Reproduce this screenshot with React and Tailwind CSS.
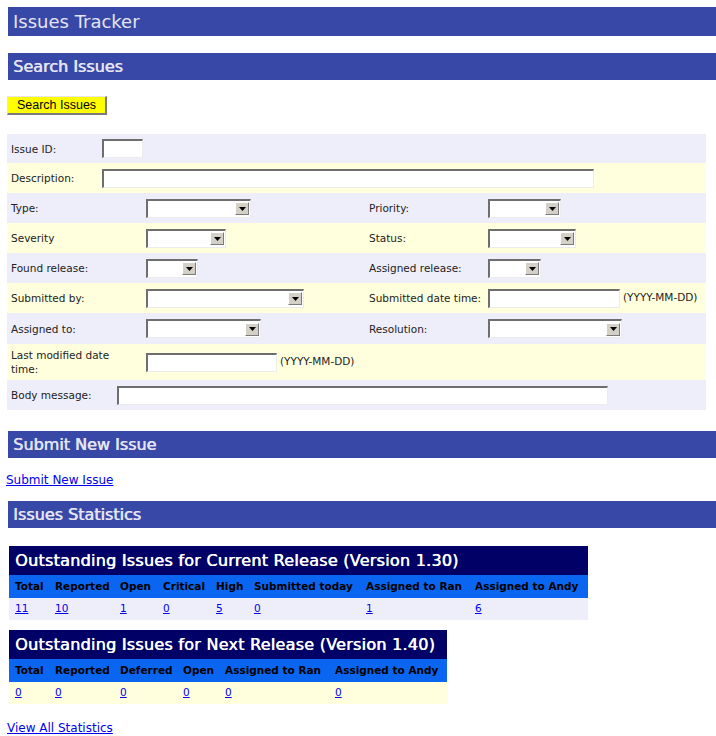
const dv = "font-['DejaVu_Sans',sans-serif]";

function Box({ w, arrow }) {
  return (
    <div className={`${w} h-[19px] shrink-0 bg-white border-t-2 border-l-2 border-t-[#6e6e6e] border-l-[#6e6e6e] border-r border-b border-r-[#ececec] border-b-[#ececec] flex items-center justify-end pr-[1px]`}>
      {arrow && (
        <div className="w-[14px] h-[13px] bg-[#d4d0c8] border-t border-l border-t-white border-l-white border-r border-b border-r-[#7b7b7b] border-b-[#7b7b7b] flex items-center justify-center">
          <svg width="7" height="4" viewBox="0 0 7 4"><polygon points="0,0 7,0 3.5,4" fill="#000" /></svg>
        </div>
      )}
    </div>
  );
}

function Row({ bg, h, children }) {
  return <div className={`${bg} ${h} flex items-center`}>{children}</div>;
}

function Label({ w, children }) {
  return <div className={`${w} shrink-0 pl-[4px] text-[10.5px] leading-[14px] text-[#222]`}>{children}</div>;
}

function Bar({ children, h = "h-[27px]", size = "text-[16px]", bold = true }) {
  return (
    <div className={`ml-2 w-[708px] ${h} bg-[#3748a6] flex items-center pl-[5px] ${size} text-[#e4e4f4] ${bold ? "[text-shadow:0.6px_0_0_#e4e4f4]" : ""}`}>
      {children}
    </div>
  );
}

function StatTable({ title, width, cols, values, rowBg }) {
  return (
    <div className={`ml-[9px] ${width}`}>
      <div className="h-[29px] bg-[#000066] flex items-center pl-[6px] text-[16px] tracking-[0.25px] text-white [text-shadow:0.6px_0_0_#fff]">{title}</div>
      <div className="h-[23px] bg-[#0a66f0] flex items-center">
        {cols.map(([label, w]) => (
          <div key={label} className={`${w} shrink-0 pl-[6px] text-[10.5px] font-bold text-black whitespace-nowrap`}>{label}</div>
        ))}
      </div>
      <div className={`h-[22px] ${rowBg} flex items-center`}>
        {cols.map(([label, w], i) => (
          <div key={label} className={`${w} shrink-0 pl-[6px] text-[10.5px]`}>
            <a href="#" className="text-[#0000ee] underline">{values[i]}</a>
          </div>
        ))}
      </div>
    </div>
  );
}

export default function App() {
  const lav = "bg-[#eeeefb]";
  const yel = "bg-[#ffffdd]";
  return (
    <div className={`${dv} bg-white w-[716px] h-[736px] overflow-hidden pt-[7px]`}>
      <Bar h="h-[29px]" size="text-[18px]" bold={false}>Issues Tracker</Bar>
      <div className="mt-[17px]"><Bar>Search Issues</Bar></div>

      <button className="mt-[16px] ml-[7px] w-[100px] h-[19px] bg-[#ffff00] border-t border-l border-t-[#e6e6e6] border-l-[#e6e6e6] border-r-2 border-b-2 border-r-[#7a7a7a] border-b-[#7a7a7a] font-['Liberation_Sans',sans-serif] text-[12.5px] text-black leading-none flex items-center justify-center">
        Search Issues
      </button>

      <div className="mt-[19px] ml-[7px] w-[699px]">
        <Row bg={lav} h="h-[29px]">
          <Label w="w-[95px]">Issue ID:</Label>
          <Box w="w-[41px]" />
        </Row>
        <Row bg={yel} h="h-[30px]">
          <Label w="w-[95px]">Description:</Label>
          <Box w="w-[492px]" />
        </Row>
        <Row bg={lav} h="h-[30px]">
          <Label w="w-[139px]">Type:</Label>
          <div className="w-[219px] shrink-0"><Box w="w-[105px]" arrow /></div>
          <Label w="w-[123px]">Priority:</Label>
          <Box w="w-[73px]" arrow />
        </Row>
        <Row bg={yel} h="h-[30px]">
          <Label w="w-[139px]">Severity</Label>
          <div className="w-[219px] shrink-0"><Box w="w-[80px]" arrow /></div>
          <Label w="w-[123px]">Status:</Label>
          <Box w="w-[88px]" arrow />
        </Row>
        <Row bg={lav} h="h-[30px]">
          <Label w="w-[139px]">Found release:</Label>
          <div className="w-[219px] shrink-0"><Box w="w-[52px]" arrow /></div>
          <Label w="w-[123px]">Assigned release:</Label>
          <Box w="w-[53px]" arrow />
        </Row>
        <Row bg={yel} h="h-[30px]">
          <Label w="w-[139px]">Submitted by:</Label>
          <div className="w-[219px] shrink-0"><Box w="w-[158px]" arrow /></div>
          <Label w="w-[123px]">Submitted date time:</Label>
          <Box w="w-[132px]" />
          <span className="ml-[3px] text-[10.5px] text-[#222]">(YYYY-MM-DD)</span>
        </Row>
        <Row bg={lav} h="h-[31px]">
          <Label w="w-[139px]">Assigned to:</Label>
          <div className="w-[219px] shrink-0"><Box w="w-[115px]" arrow /></div>
          <Label w="w-[123px]">Resolution:</Label>
          <Box w="w-[134px]" arrow />
        </Row>
        <Row bg={yel} h="h-[36px]">
          <Label w="w-[139px]"><div className="w-[110px]">Last modified date time:</div></Label>
          <Box w="w-[131px]" />
          <span className="ml-[3px] text-[10.5px] text-[#222]">(YYYY-MM-DD)</span>
        </Row>
        <Row bg={lav} h="h-[30px]">
          <Label w="w-[110px]">Body message:</Label>
          <Box w="w-[491px]" />
        </Row>
      </div>

      <div className="mt-[21px]"><Bar>Submit New Issue</Bar></div>
      <div className="mt-[14px] ml-[6px] h-[16px] flex items-center">
        <a href="#" className="text-[12px] text-[#0000ee] underline">Submit New Issue</a>
      </div>
      <div className="mt-[13px]"><Bar>Issues Statistics</Bar></div>

      <div className="mt-[18px]">
        <StatTable
          title="Outstanding Issues for Current Release (Version 1.30)"
          width="w-[579px]"
          rowBg={lav}
          cols={[["Total", "w-[40px]"], ["Reported", "w-[65px]"], ["Open", "w-[43px]"], ["Critical", "w-[53px]"], ["High", "w-[38px]"], ["Submitted today", "w-[112px]"], ["Assigned to Ran", "w-[109px]"], ["Assigned to Andy", "w-[119px]"]]}
          values={["11", "10", "1", "0", "5", "0", "1", "6"]}
        />
      </div>
      <div className="mt-[10px]">
        <StatTable
          title="Outstanding Issues for Next Release (Version 1.40)"
          width="w-[438px]"
          rowBg={yel}
          cols={[["Total", "w-[40px]"], ["Reported", "w-[65px]"], ["Deferred", "w-[63px]"], ["Open", "w-[42px]"], ["Assigned to Ran", "w-[110px]"], ["Assigned to Andy", "w-[118px]"]]}
          values={["0", "0", "0", "0", "0", "0"]}
        />
      </div>
      <div className="mt-[16px] ml-[7px] h-[16px] flex items-center">
        <a href="#" className="text-[12px] text-[#0000ee] underline">View All Statistics</a>
      </div>
    </div>
  );
}
